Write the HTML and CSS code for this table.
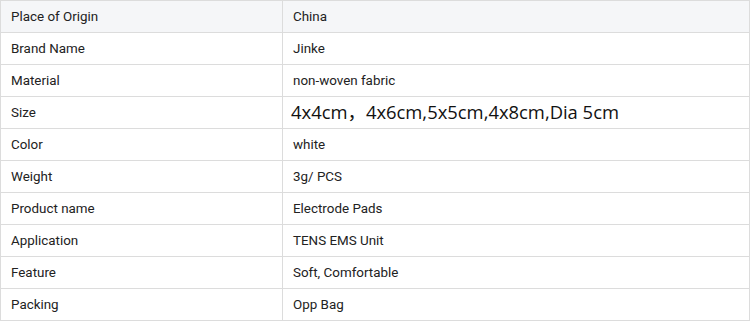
FILE: index.html
```html
<!DOCTYPE html>
<html>
<head>
<meta charset="utf-8">
<link rel="stylesheet" href="styles.css">
</head>
<body>
<table class="spec">
  <tr class="head"><td class="k">Place of Origin</td><td class="v">China</td></tr>
  <tr><td class="k">Brand Name</td><td class="v">Jinke</td></tr>
  <tr><td class="k">Material</td><td class="v">non-woven fabric</td></tr>
  <tr><td class="k">Size</td><td class="v"><span class="big">4x4cm，4x6cm,5x5cm,4x8cm,Dia 5cm</span></td></tr>
  <tr><td class="k">Color</td><td class="v">white</td></tr>
  <tr><td class="k">Weight</td><td class="v">3g/ PCS</td></tr>
  <tr><td class="k">Product name</td><td class="v">Electrode Pads</td></tr>
  <tr><td class="k">Application</td><td class="v">TENS EMS Unit</td></tr>
  <tr><td class="k">Feature</td><td class="v">Soft, Comfortable</td></tr>
  <tr><td class="k">Packing</td><td class="v">Opp Bag</td></tr>
</table>
</body>
</html>
```
FILE: styles.css
```css
html, body {
  margin: 0;
  padding: 0;
  background: #fff;
}
.spec {
  border-collapse: collapse;
  width: 750px;
  font-family: Roboto, "Liberation Sans", sans-serif;
  font-size: 13.4px;
  color: #222;
}
.spec td {
  border: 1px solid #dcdcdc;
  height: 32px;
  padding: 0 0 0 10px;
  box-sizing: border-box;
  vertical-align: middle;
  white-space: nowrap;
}
.spec td.k {
  width: 282px;
}
.spec td.v {
  padding-left: 10px;
}
.head td {
  background: #f5f6f8;
}
.big {
  font-family: "Open Sans", "Noto Sans CJK SC", sans-serif;
  font-size: 18.4px;
  line-height: 1;
  color: #111;
  margin-left: -2px;
}
```
